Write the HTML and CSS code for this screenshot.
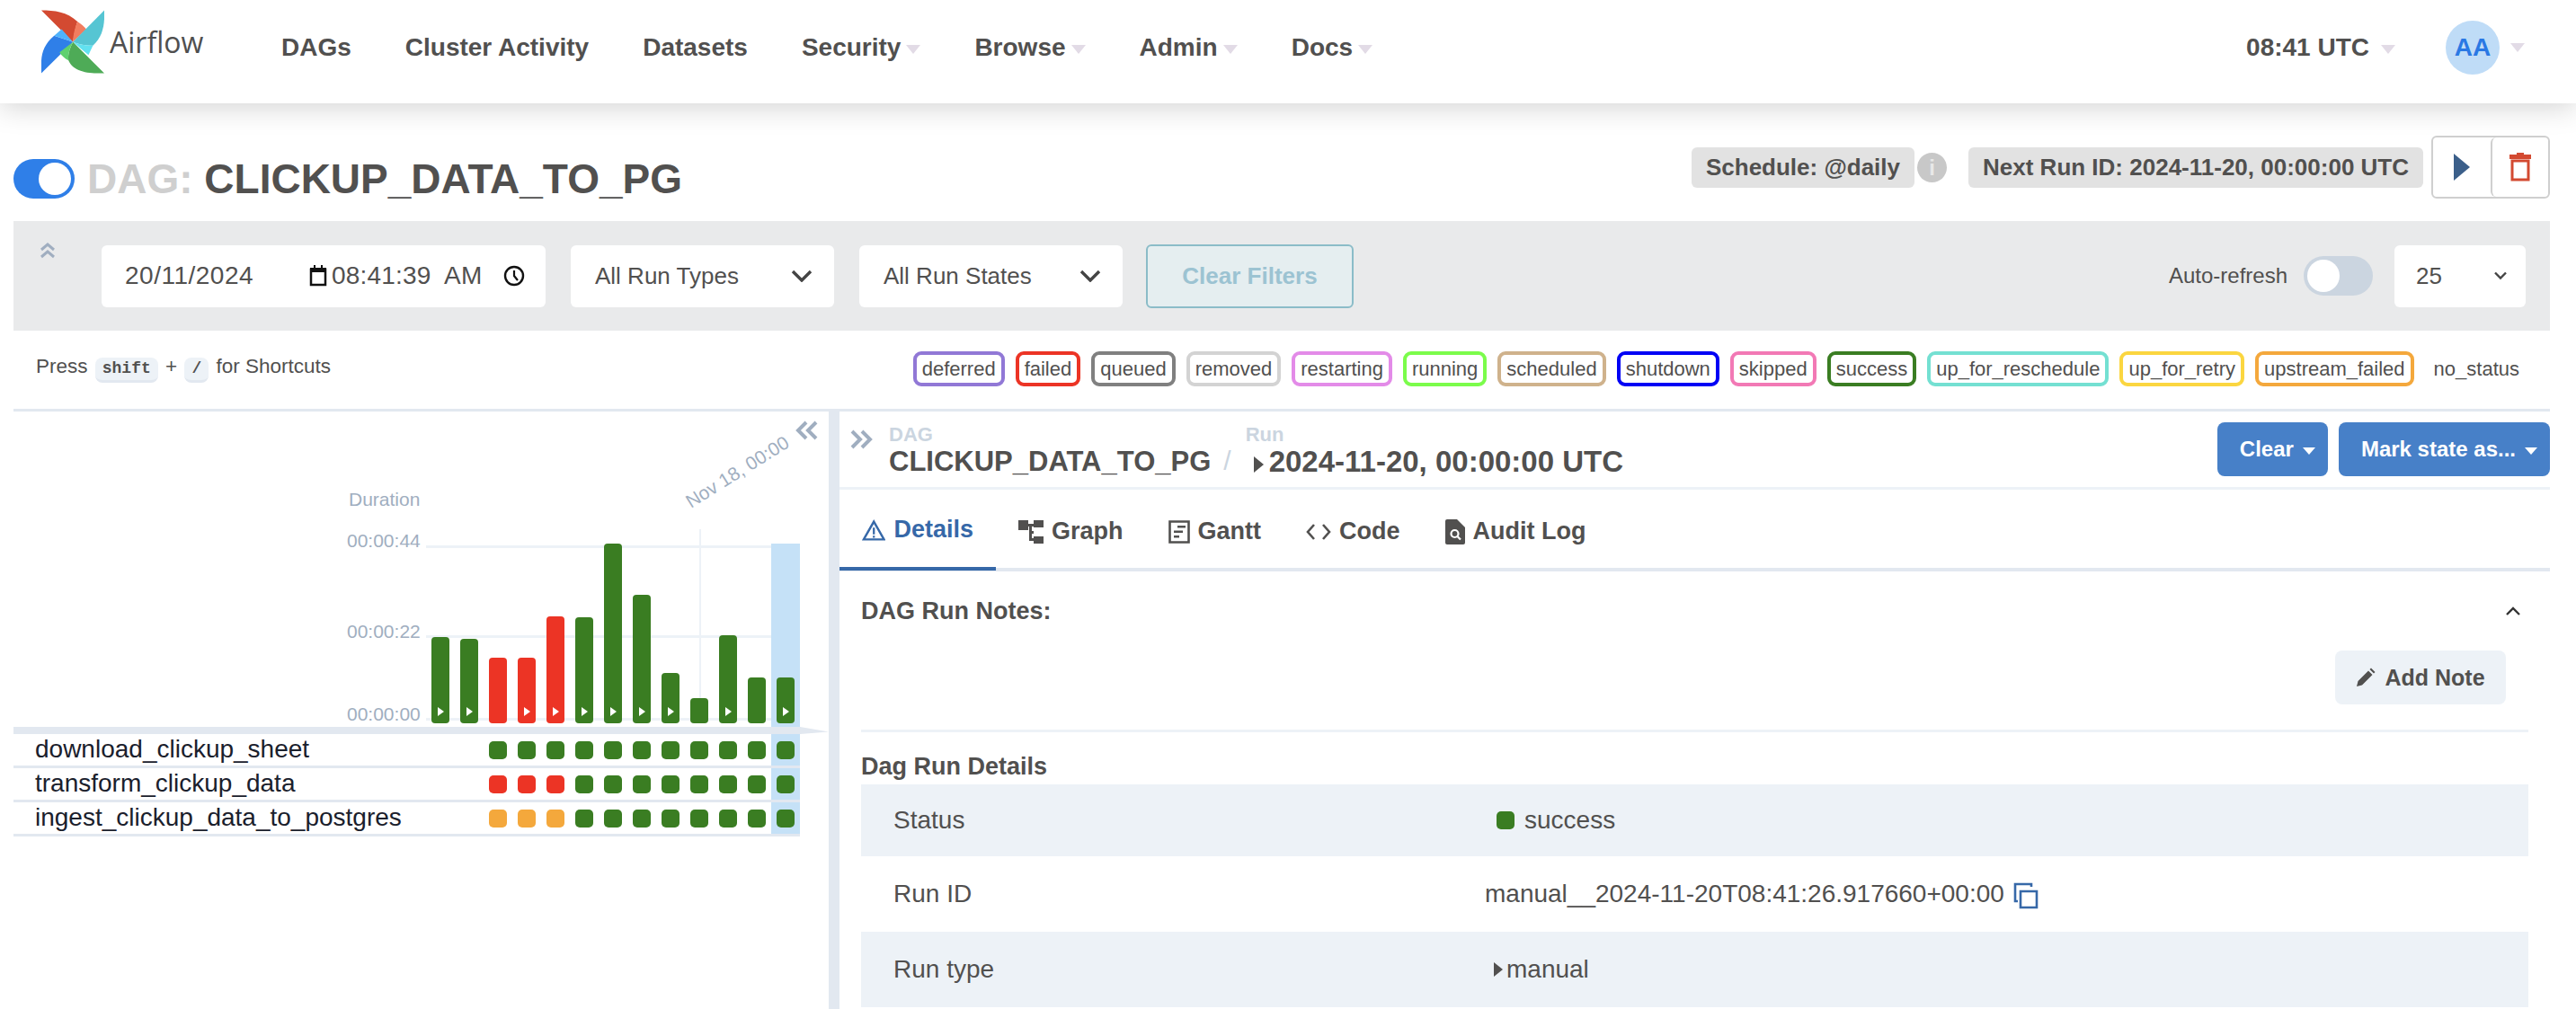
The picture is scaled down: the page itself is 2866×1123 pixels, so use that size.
FILE: index.html
```html
<!DOCTYPE html>
<html lang="en">
<head>
    <meta charset="UTF-8">
    <title>Airflow - clickup_data_to_pg</title>
    <link rel="stylesheet" href="styles.css">
</head>
<body>
    <!-- Top navigation -->
    <nav class="navbar">
        <div class="brand">
            <svg class="logo" viewBox="137 37 211 211">
                <path fill="#d34a31" d="M137 37C180 37 225 42 258 75C250 100 247 120 243 143Z"/>
                <path fill="#f27d5f" d="M258 75C270 82 280 92 288 100L243 143C243 120 250 95 258 75Z"/>
                <path fill="#56c5d3" d="M348 37C350 80 345 125 310 155C290 156 265 152 243 143Z"/>
                <path fill="#62e1f0" d="M310 155L295 187L243 143C265 152 290 156 310 155Z"/>
                <path fill="#2f7fe8" d="M137 248C135 200 135 160 180 122C200 130 225 135 243 143Z"/>
                <path fill="#4fb2fb" d="M180 122L205 100L243 143C225 135 200 130 180 122Z"/>
                <path fill="#4eab57" d="M348 248C300 250 245 245 228 205C225 180 235 160 243 143Z"/>
                <path fill="#5fd16f" d="M198 178L243 143C235 160 225 180 228 205C215 198 205 190 198 178Z"/>
            </svg>
            <span class="brand-name">Airflow</span>
        </div>
        <ul class="nav-links">
            <li>DAGs</li>
            <li>Cluster Activity</li>
            <li>Datasets</li>
            <li class="caret-after">Security</li>
            <li class="caret-after">Browse</li>
            <li class="caret-after">Admin</li>
            <li class="caret-after">Docs</li>
        </ul>
        <div class="nav-right">
            <span class="clock caret-after">08:41 UTC</span>
            <span class="avatar">AA</span>
            <span class="caret-only"></span>
        </div>
    </nav>

    <main class="page">
        <!-- Title row -->
        <header class="title-row">
            <span class="dag-toggle"><span class="dag-toggle-knob"></span></span>
            <h1 class="dag-title"><span class="dag-prefix">DAG:</span> CLICKUP_DATA_TO_PG</h1>
            <div class="title-meta">
                <span class="badge">Schedule: @daily</span>
                <span class="info-dot">i</span>
                <span class="badge badge-next">Next Run ID: 2024-11-20, 00:00:00 UTC</span>
                <div class="btn-group">
                    <button class="icon-btn">
                        <svg width="18" height="30" viewBox="0 0 18 30"><path fill="#3b5f8a" d="M0 0L18 15L0 30Z"/></svg>
                    </button>
                    <button class="icon-btn">
                        <svg width="24" height="32" viewBox="0 0 24 32"><path fill="#d34a31" d="M8 0h8v2h8v5H0V2h8z"/><path fill="none" stroke="#d34a31" stroke-width="3" d="M3 9h18v21H3z"/></svg>
                    </button>
                </div>
            </div>
        </header>

        <!-- Filters -->
        <section class="filter-bar">
            <svg class="collapse-up" width="16" height="18" viewBox="0 0 16 18"><path fill="none" stroke="#a0aec0" stroke-width="3" d="M1 8L8 2L15 8M1 16L8 10L15 16"/></svg>
            <div class="field field-date">
                <span class="date-part">20/11/2024</span>
                <svg width="20" height="24" viewBox="0 0 20 24"><path fill="none" stroke="#111" stroke-width="2.5" d="M2 5h16v17H2z"/><path fill="#111" d="M1 3h18v5H1zM5 0h2v4H5zM13 0h2v4h-2z"/></svg>
                <span class="time-part">08:41:39&nbsp; AM</span>
                <svg width="24" height="24" viewBox="0 0 24 24"><circle cx="12" cy="12" r="10" fill="none" stroke="#111" stroke-width="2.4"/><path fill="none" stroke="#111" stroke-width="2.2" d="M12 6v6l4 5"/></svg>
            </div>
            <div class="field field-select"><span>All Run Types</span><svg class="chev" width="24" height="14" viewBox="0 0 24 14"><path fill="none" stroke="#444" stroke-width="3.4" d="M2 2L12 12L22 2"/></svg></div>
            <div class="field field-select"><span>All Run States</span><svg class="chev" width="24" height="14" viewBox="0 0 24 14"><path fill="none" stroke="#444" stroke-width="3.4" d="M2 2L12 12L22 2"/></svg></div>
            <button class="clear-filters">Clear Filters</button>
            <div class="auto-refresh">
                <span>Auto-refresh</span>
                <span class="switch"><span class="switch-knob"></span></span>
            </div>
            <div class="field field-count"><span>25</span><svg width="16" height="10" viewBox="0 0 16 10"><path fill="none" stroke="#444" stroke-width="2.4" d="M2 1.500L8 7.500L14 1.500"/></svg></div>
        </section>

        <!-- Shortcuts and state legend -->
        <section class="legend-row">
            <div class="shortcuts">Press <kbd>shift</kbd> + <kbd>/</kbd> for Shortcuts</div>
            <ul class="legend">
                <li style="border-color: #9178d6">deferred</li>
                <li style="border-color: #ec3425">failed</li>
                <li style="border-color: #808080">queued</li>
                <li style="border-color: #d3d3d3">removed</li>
                <li style="border-color: #e38be8">restarting</li>
                <li style="border-color: #7bfc4b">running</li>
                <li style="border-color: #cfb28c">scheduled</li>
                <li style="border-color: #0000f5">shutdown</li>
                <li style="border-color: #f279b5">skipped</li>
                <li style="border-color: #3a7d22">success</li>
                <li style="border-color: #74e0d2">up_for_reschedule</li>
                <li style="border-color: #fbd640">up_for_retry</li>
                <li style="border-color: #f4a83c">upstream_failed</li>
                <li class="legend-none">no_status</li>
            </ul>
        </section>

        <div class="split">
            <!-- Grid and duration chart -->
            <section class="grid-pane">
                <div class="chart">
                    <svg class="collapse-left" width="26" height="22" viewBox="0 0 26 22"><path fill="none" stroke="#a0aec0" stroke-width="4" d="M12 2L3 11L12 20M23 2L14 11L23 20"/></svg>
                    <span class="axis-title">Duration</span>
                    <span class="axis-label tick-top">00:00:44</span>
                    <span class="axis-label tick-mid">00:00:22</span>
                    <span class="axis-label tick-low">00:00:00</span>
                    <i class="grid-line line-top"></i>
                    <i class="grid-line line-mid"></i>
                    <i class="grid-line line-low"></i>
                    <i class="date-line"></i>
                    <span class="date-label">Nov 18, 00:00</span>
                    <div class="bars" id="bars"></div>
                </div>
                <div class="chart-rule"></div>
                <div class="task-rows" id="task-rows"></div>
            </section>

            <div class="gutter"></div>

            <!-- Details panel -->
            <section class="detail-pane">
                <div class="crumb-row">
                    <svg class="collapse-right" width="26" height="22" viewBox="0 0 26 22"><path fill="none" stroke="#a0aec0" stroke-width="4" d="M3 2L12 11L3 20M14 2L23 11L14 20"/></svg>
                    <div class="crumb">
                        <span class="crumb-label">DAG</span>
                        <span class="crumb-value crumb-name">CLICKUP_DATA_TO_PG</span>
                    </div>
                    <span class="crumb-sep">/</span>
                    <div class="crumb">
                        <span class="crumb-label">Run</span>
                        <span class="crumb-value"><i class="tri"></i>2024-11-20, 00:00:00 UTC</span>
                    </div>
                    <div class="crumb-actions">
                        <button class="action-btn">Clear<i class="btn-caret"></i></button>
                        <button class="action-btn">Mark state as...<i class="btn-caret"></i></button>
                    </div>
                </div>

                <div class="tabs">
                    <div class="tab tab-active">
                        <svg width="28" height="26" viewBox="0 0 28 26"><path fill="none" stroke="#3668a8" stroke-width="2.6" d="M14 3L26 24H2Z"/><path fill="#3668a8" d="M12.800 10h2.400v8h-2.400zM12.800 19.500h2.400v2.400h-2.400z"/></svg>
                        Details
                    </div>
                    <div class="tab">
                        <svg width="28" height="26" viewBox="0 0 28 26"><path fill="#51504f" d="M0 0h11v11H0zM17 0h11v8H17zM17 18h11v8H17zM11 4h6v3h-6zM12 7h3v15h-3zM12 12h5v3h-5zM12 20h5v3h-5z"/></svg>
                        Graph
                    </div>
                    <div class="tab">
                        <svg width="24" height="26" viewBox="0 0 24 26"><path fill="none" stroke="#51504f" stroke-width="2.6" d="M1.500 1.500h21v23h-21z"/><path fill="#51504f" d="M10 6h9v2.600h-9zM6 11.500h10v2.600H6zM6 17h6v2.600H6z"/></svg>
                        Gantt
                    </div>
                    <div class="tab">
                        <svg width="28" height="20" viewBox="0 0 28 20"><path fill="none" stroke="#51504f" stroke-width="2.6" d="M9 2L2 10L9 18M19 2L26 10L19 18"/></svg>
                        Code
                    </div>
                    <div class="tab">
                        <svg width="22" height="28" viewBox="0 0 22 28"><path fill="#51504f" d="M2 0h11l9 9v17a2 2 0 0 1-2 2H2a2 2 0 0 1-2-2V2a2 2 0 0 1 2-2z"/><circle cx="10.500" cy="16" r="4" fill="none" stroke="#fff" stroke-width="2.200"/><path stroke="#fff" stroke-width="2.200" d="M13.500 19l3.500 3.500"/></svg>
                        Audit Log
                    </div>
                </div>

                <div class="detail-body">
                    <div class="notes-head">
                        <h2>DAG Run Notes:</h2>
                        <svg width="18" height="12" viewBox="0 0 18 12"><path fill="none" stroke="#333" stroke-width="2.4" d="M2 10L9 3L16 10"/></svg>
                    </div>
                    <div class="notes-actions">
                        <button class="add-note">
                            <svg width="22" height="22" viewBox="0 0 22 22"><path fill="#51504f" d="M1 21l1.500-6L14 3.500l4.500 4.500L7 19.500zM15.500 2l1.500-1.500 4.500 4.500L20 6.500z"/></svg>
                            Add Note
                        </button>
                    </div>
                    <h2 class="details-head">Dag Run Details</h2>
                    <div class="detail-row row-status">
                        <span class="detail-key">Status</span>
                        <span class="detail-val val-status"><i class="square"></i>success</span>
                    </div>
                    <div class="detail-row row-plain">
                        <span class="detail-key">Run ID</span>
                        <span class="detail-val">manual__2024-11-20T08:41:26.917660+00:00
                            <svg class="copy" width="30" height="30" viewBox="0 0 30 30"><path fill="none" stroke="#3668a8" stroke-width="2.600" d="M9 10h18v18H9z"/><path fill="none" stroke="#3668a8" stroke-width="2.600" d="M21 5V2H3v19h3"/></svg>
                        </span>
                    </div>
                    <div class="detail-row row-tinted">
                        <span class="detail-key">Run type</span>
                        <span class="detail-val val-type"><i class="tri tri-small"></i>manual</span>
                    </div>
                </div>
            </section>
        </div>
    </main>

    <script>
        // Chart and grid data, oldest run first
        const G = 'green', R = 'red', O = 'orange';
        const runs = [
            { h: 96, s: G, play: true },
            { h: 94, s: G, play: true },
            { h: 73, s: R, play: false },
            { h: 73, s: R, play: true },
            { h: 119, s: R, play: true },
            { h: 118, s: G, play: true },
            { h: 200, s: G, play: true },
            { h: 143, s: G, play: true },
            { h: 56, s: G, play: true },
            { h: 28, s: G, play: false },
            { h: 98, s: G, play: true },
            { h: 51, s: G, play: false },
            { h: 51, s: G, play: true }
        ];
        const tasks = [
            { name: 'download_clickup_sheet', cells: [G, G, G, G, G, G, G, G, G, G, G] },
            { name: 'transform_clickup_data', cells: [R, R, R, G, G, G, G, G, G, G, G] },
            { name: 'ingest_clickup_data_to_postgres', cells: [O, O, O, G, G, G, G, G, G, G, G] }
        ];

        const bars = document.getElementById('bars');
        runs.forEach(function (run, i) {
            const col = document.createElement('div');
            col.className = 'bar-col' + (i === runs.length - 1 ? ' selected' : '');
            const bar = document.createElement('div');
            bar.className = 'bar ' + run.s;
            bar.style.height = run.h + 'px';
            if (run.play) {
                const tri = document.createElement('i');
                tri.className = 'bar-play';
                bar.appendChild(tri);
            }
            col.appendChild(bar);
            bars.appendChild(col);
        });

        const rows = document.getElementById('task-rows');
        tasks.forEach(function (task) {
            const row = document.createElement('div');
            row.className = 'task-row';
            const name = document.createElement('span');
            name.className = 'task-name';
            name.textContent = task.name;
            row.appendChild(name);
            const cells = document.createElement('div');
            cells.className = 'task-cells';
            task.cells.forEach(function (state, i) {
                const cell = document.createElement('div');
                cell.className = 'task-cell' + (i === task.cells.length - 1 ? ' selected' : '');
                const sq = document.createElement('i');
                sq.className = 'square ' + state;
                cell.appendChild(sq);
                cells.appendChild(cell);
            });
            row.appendChild(cells);
            rows.appendChild(row);
        });
    </script>
</body>
</html>
```

FILE: styles.css
```css
* {
    box-sizing: border-box;
}
html, body {
    height: 1123px;
    overflow: hidden;
}
body {
    margin: 0;
    font-family: "Liberation Sans", Arial, sans-serif;
    font-size: 28px;
    color: #51504f;
    background: #fff;
}
ul {
    list-style: none;
    margin: 0;
    padding: 0;
}
button {
    font-family: inherit;
    border: none;
    cursor: pointer;
}
i {
    font-style: normal;
}

/* Navbar */
.navbar {
    position: relative;
    height: 115px;
    display: flex;
    align-items: center;
    padding: 0 29px 0 46px;
    background: #fff;
    box-shadow: 0 4px 30px rgba(0, 0, 0, 0.18);
}
.brand {
    display: flex;
    align-items: center;
    width: 267px;
    height: 71px;
    margin-top: -22px;
}
.logo {
    width: 70px;
    height: 71px;
}
.brand-name {
    margin-left: 6px;
    font-family: "Open Sans", sans-serif;
    font-size: 32px;
    color: #4f4f4f;
}
.nav-links {
    display: flex;
    margin-top: -9px;
    font-weight: bold;
    gap: 60px;
}
.nav-right {
    margin-left: auto;
    margin-right: 28px;
    display: flex;
    align-items: center;
    font-weight: bold;
    margin-top: -9px;
}
.caret-after::after {
    content: "";
    display: inline-block;
    margin-left: 6px;
    border: 8px solid transparent;
    border-top: 10px solid #e2dbe6;
    border-bottom: 0;
    vertical-align: middle;
}
.clock::after {
    margin-left: 13px;
}
.avatar {
    width: 60px;
    height: 60px;
    margin-left: 56px;
    border-radius: 50%;
    background: #bfdcf7;
    color: #2a78e4;
    display: flex;
    align-items: center;
    justify-content: center;
}
.caret-only {
    margin-left: 12px;
    border: 8px solid transparent;
    border-top: 10px solid #e2dbe6;
    border-bottom: 0;
}

/* Page */
.page {
    padding: 0 29px 0 15px;
}
.title-row {
    display: flex;
    align-items: center;
    height: 131px;
    padding-top: 11px;
}
.dag-toggle {
    width: 68px;
    height: 44px;
    padding: 4px;
    margin-top: 25px;
    border-radius: 22px;
    background: #2f7fe8;
    display: flex;
    justify-content: flex-end;
}
.dag-toggle-knob {
    width: 36px;
    height: 36px;
    border-radius: 50%;
    background: #fff;
}
.dag-title {
    margin: 25px 0 0 14px;
    font-size: 46px;
    line-height: 52px;
}
.dag-prefix {
    color: #cfcfcf;
}
.title-meta {
    margin-left: auto;
    display: flex;
    align-items: center;
}
.badge {
    height: 45px;
    padding: 0 16px;
    border-radius: 6px;
    background: #e2e2e2;
    font-size: 26px;
    font-weight: bold;
    line-height: 45px;
}
.badge-next {
    margin-right: 9px;
}
.info-dot {
    width: 33px;
    height: 33px;
    margin: 0 24px 0 3px;
    border-radius: 50%;
    background: #c8c8c8;
    color: #e8e8e8;
    font-size: 24px;
    font-weight: bold;
    line-height: 33px;
    text-align: center;
}
.btn-group {
    display: flex;
    height: 70px;
    border: 2px solid #cfcfcf;
    border-radius: 6px;
}
.icon-btn {
    width: 64px;
    background: #fff;
    display: flex;
    align-items: center;
    justify-content: center;
    border-radius: 6px;
}
.icon-btn + .icon-btn {
    border-left: 2px solid #cfcfcf;
}

/* Filters */
.filter-bar {
    height: 122px;
    padding-left: 30px;
    padding-right: 27px;
    background: #e9eaeb;
    display: flex;
    align-items: center;
}
.collapse-up {
    align-self: flex-start;
    margin-top: 24px;
}
.field {
    height: 69px;
    background: #fff;
    border-radius: 6px;
    display: flex;
    align-items: center;
}
.field-date {
    width: 494px;
    margin-left: 52px;
    padding-left: 26px;
}
.date-part {
    width: 205px;
    letter-spacing: 0.5px;
}
.time-part {
    margin: 0 26px 0 5px;
    width: 165px;
    letter-spacing: 0.2px;
    white-space: nowrap;
}
.field-select {
    width: 293px;
    margin-left: 28px;
    padding: 0 24px 0 27px;
    justify-content: space-between;
    font-size: 26px;
}
.clear-filters {
    width: 231px;
    height: 71px;
    margin-left: 26px;
    border: 2px solid #8bbcc8;
    border-radius: 6px;
    background: #e5eef0;
    color: #9cc3d2;
    font-size: 26px;
    font-weight: bold;
}
.auto-refresh {
    margin-left: auto;
    display: flex;
    align-items: center;
    font-size: 24px;
}
.switch {
    width: 77px;
    height: 44px;
    margin-left: 18px;
    padding: 4px;
    border-radius: 22px;
    background: #cbd5e0;
}
.switch-knob {
    display: block;
    width: 36px;
    height: 36px;
    border-radius: 50%;
    background: #fff;
}
.field-count {
    width: 146px;
    margin-left: 24px;
    padding: 0 20px 0 24px;
    justify-content: space-between;
    font-size: 26px;
}

/* Legend */
.legend-row {
    height: 90px;
    padding-bottom: 3px;
    border-bottom: 3px solid #e2e8f0;
    display: flex;
    align-items: center;
    justify-content: space-between;
    font-size: 22px;
}
.shortcuts {
    padding-left: 25px;
    font-size: 22.500px;
}
kbd {
    display: inline-block;
    margin: 0 2px;
    padding: 2px 8px 3px;
    border-radius: 8px;
    border-bottom: 3px solid #e2e8f0;
    background: #edf2f7;
    font-family: "Liberation Mono", monospace;
    font-size: 18px;
    font-weight: bold;
}
.legend {
    display: flex;
    gap: 12px;
    padding-right: 24px;
}
.legend li {
    height: 39px;
    padding: 0 6px;
    border: 4px solid transparent;
    border-radius: 9px;
    background: #fff;
    line-height: 31px;
    white-space: nowrap;
}
.legend-none {
    margin-left: 0;
}

/* Split layout */
.split {
    display: flex;
    height: 665px;
}
.grid-pane {
    width: 907px;
    flex: none;
}
.gutter {
    width: 12px;
    flex: none;
    background: #e2e8f0;
}
.detail-pane {
    flex: 1;
    min-width: 0;
}

/* Chart */
.chart {
    position: relative;
    height: 351px;
    padding: 147px 0 0 459px;
}
.collapse-left {
    position: absolute;
    top: 10px;
    right: 11px;
}
.axis-title,
.axis-label,
.date-label {
    position: absolute;
    font-size: 21px;
    color: #a0aec0;
    white-space: nowrap;
}
.axis-title {
    top: 86px;
    left: 373px;
}
.axis-label {
    left: 371px;
}
.tick-top { top: 132px; }
.tick-mid { top: 233px; }
.tick-low { top: 325px; }
.grid-line {
    position: absolute;
    left: 459px;
    width: 416px;
    height: 3px;
    background: #edf2f7;
}
.line-top { top: 149px; }
.line-mid { top: 249px; }
.line-low { top: 341px; }
.date-line {
    position: absolute;
    top: 131px;
    left: 763px;
    width: 2px;
    height: 216px;
    background: #edf2f7;
}
.date-label {
    top: 86px;
    left: 750px;
    transform: rotate(-32deg);
    transform-origin: left center;
    margin-top: 4px;
}
.bars {
    position: relative;
    height: 204px;
    display: flex;
}
.bar-col {
    width: 32px;
    height: 204px;
    padding: 0 6px 4px;
    display: flex;
    align-items: flex-end;
}
.bar-col.selected,
.task-cell.selected {
    background: #c5e1f7;
}
.bar {
    position: relative;
    width: 20px;
    border-radius: 4px;
}
.bar-play {
    position: absolute;
    left: 7px;
    bottom: 8px;
    border-left: 7px solid #fff;
    border-top: 5px solid transparent;
    border-bottom: 5px solid transparent;
}
.green { background: #3a7d22; }
.red { background: #ec3425; }
.orange { background: #f4a83c; }
.chart-rule {
    height: 8px;
    background: #e2e8f0;
    clip-path: polygon(0 0, 96.500% 0, 100% 70%, 96.500% 100%, 0 100%);
}

/* Task rows */
.task-rows {
    width: 875px;
}
.task-row {
    height: 38px;
    border-bottom: 3px solid #e2e8f0;
    display: flex;
    justify-content: space-between;
    color: #1a202c;
}
.task-name {
    padding-left: 24px;
    line-height: 34px;
}
.task-cells {
    display: flex;
    justify-content: flex-end;
}
.task-cell {
    width: 32px;
    padding: 8px 6px 0;
}
.square {
    display: block;
    width: 20px;
    height: 20px;
    border-radius: 5px;
}

/* Breadcrumb row */
.crumb-row {
    height: 87px;
    border-bottom: 3px solid #edf2f7;
    display: flex;
    align-items: center;
}
.collapse-right {
    margin: 0 18px 22px 11px;
    flex: none;
}
.crumb {
    display: flex;
    flex-direction: column;
}
.crumb-label {
    font-size: 22px;
    font-weight: bold;
    line-height: 26px;
    color: #cbd5e0;
    margin-top: 2px;
}
.crumb-value {
    font-size: 33px;
    font-weight: bold;
    line-height: 34px;
    white-space: nowrap;
}
.crumb-name {
    font-size: 31px;
}
.crumb-sep {
    margin: 26px 16px 0 14px;
    color: #cbd5e0;
    font-size: 30px;
}
.tri {
    display: inline-block;
    margin: 0 6px 0 9px;
    border-left: 11px solid #51504f;
    border-top: 9px solid transparent;
    border-bottom: 9px solid transparent;
    vertical-align: -1px;
}
.crumb-actions {
    margin-left: auto;
    display: flex;
    gap: 12px;
}
.action-btn {
    height: 60px;
    padding: 0 14px 0 25px;
    border-radius: 8px;
    background: #4780c8;
    color: #fff;
    font-size: 24px;
    font-weight: bold;
}
.btn-caret {
    display: inline-block;
    margin-left: 10px;
    border: 7px solid transparent;
    border-top: 8px solid #fff;
    border-bottom: 0;
    vertical-align: 2px;
}

/* Tabs */
.tabs {
    height: 91px;
    padding-top: 3px;
    border-bottom: 4px solid #e2e8f0;
    display: flex;
}
.tab {
    height: 87px;
    padding: 0 25px;
    margin-bottom: -4px;
    display: flex;
    align-items: center;
    gap: 9px;
    font-size: 27px;
    font-weight: bold;
    white-space: nowrap;
}
.tab-active {
    width: 174px;
    border-bottom: 4px solid #3668a8;
    color: #3668a8;
}

/* Details */
.detail-body {
    padding: 0 24px;
}
.detail-body h2 {
    margin: 0;
    font-size: 27px;
}
.notes-head {
    height: 88px;
    padding-right: 8px;
    display: flex;
    align-items: center;
    justify-content: space-between;
}
.notes-actions {
    height: 91px;
    padding: 0 25px 0 0;
    border-bottom: 3px solid #edf2f7;
    display: flex;
    justify-content: flex-end;
}
.add-note {
    width: 190px;
    height: 60px;
    border-radius: 8px;
    background: #edf2f7;
    color: #51504f;
    font-size: 25px;
    font-weight: bold;
    display: flex;
    align-items: center;
    justify-content: center;
    gap: 10px;
}
.detail-body .details-head {
    height: 58px;
    padding-top: 22px;
    line-height: 32px;
}
.detail-row {
    display: flex;
    align-items: center;
    height: 84px;
    padding-left: 36px;
}
.row-status,
.row-tinted {
    background: #edf2f7;
}
.row-status {
    height: 80px;
}
.detail-key {
    width: 658px;
}
.detail-val {
    display: flex;
    align-items: center;
    white-space: nowrap;
}
.val-status {
    margin-left: 13px;
}
.val-status .square {
    margin-right: 11px;
    background: #3a7d22;
}
.val-type .tri-small {
    margin: 0 4px 0 10px;
    border-left-width: 10px;
    border-top-width: 8px;
    border-bottom-width: 8px;
    vertical-align: 0;
}
.copy {
    margin-left: 9px;
    margin-bottom: -4px;
}
```
